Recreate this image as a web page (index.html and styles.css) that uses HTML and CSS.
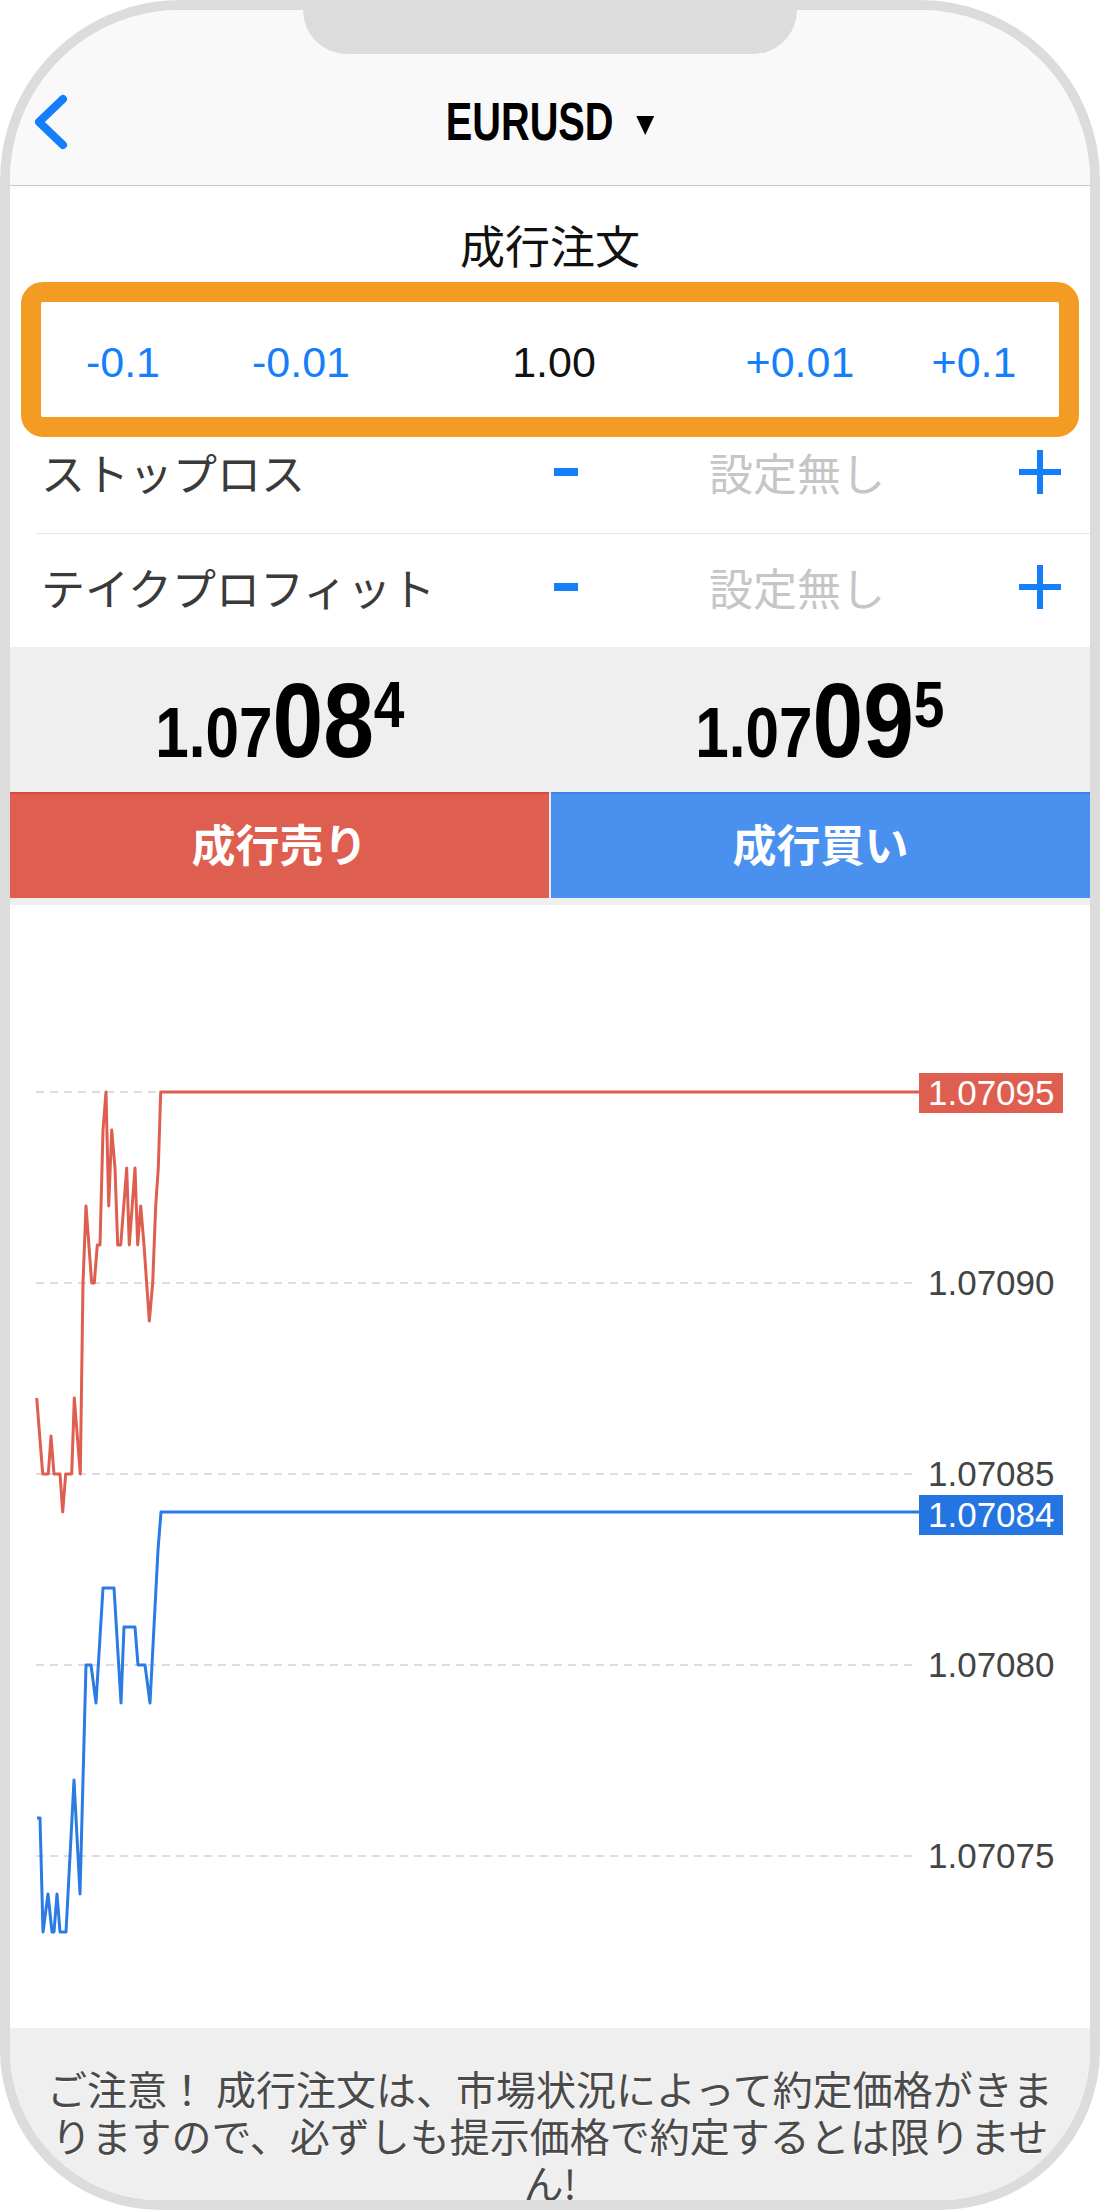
FILE: index.html
```html
<!DOCTYPE html>
<html lang="ja">
<head>
<meta charset="utf-8">
<title>EURUSD 成行注文</title>
<link rel="stylesheet" href="styles.css">
</head>
<body>
<div class="phone">
  <div class="notch"></div>

  <header class="nav">
    <div class="nav-left">
      <svg class="back" width="40" height="60" viewBox="0 0 40 60"><path d="M28 7 L4 30 L28 53" fill="none" stroke="#147efb" stroke-width="8" stroke-linecap="round" stroke-linejoin="round"/></svg>
    </div>
    <div class="nav-title"><span class="sym">EURUSD</span><svg class="caret" width="24" height="19" viewBox="0 0 24 19"><polygon points="0,0 24,0 12,19" fill="#000"/></svg></div>
    <div class="nav-right"></div>
  </header>

  <section class="order">
    <h1 class="order-title">成行注文</h1>
    <div class="lot-box">
      <span class="step">-0.1</span>
      <span class="step">-0.01</span>
      <span class="lot">1.00</span>
      <span class="step">+0.01</span>
      <span class="step">+0.1</span>
    </div>
    <div class="param-row first">
      <span class="param-label">ストップロス</span>
      <span class="minus"></span>
      <span class="param-value">設定無し</span>
      <svg class="plus" width="42" height="44" viewBox="0 0 42 44"><path d="M21 0V44M0 22H42" stroke="#147efb" stroke-width="6"/></svg>
    </div>
    <div class="divider"></div>
    <div class="param-row second">
      <span class="param-label">テイクプロフィット</span>
      <span class="minus"></span>
      <span class="param-value">設定無し</span>
      <svg class="plus" width="42" height="44" viewBox="0 0 42 44"><path d="M21 0V44M0 22H42" stroke="#147efb" stroke-width="6"/></svg>
    </div>
  </section>

  <section class="quotes">
    <div class="quote"><span class="price"><span class="p-small">1.07</span><span class="p-big">08</span><span class="p-sup">4</span></span></div>
    <div class="quote"><span class="price"><span class="p-small">1.07</span><span class="p-big">09</span><span class="p-sup">5</span></span></div>
  </section>

  <div class="actions">
    <div class="btn sell">成行売り</div>
    <div class="btn buy">成行買い</div>
  </div>

  <div class="chart">
    <svg width="1080" height="1123" viewBox="0 0 1080 1123">
      <g stroke="#d3d3d3" stroke-width="1.5" stroke-dasharray="8 6" fill="none">
        <line x1="26" y1="187" x2="902" y2="187"/>
        <line x1="26" y1="378" x2="902" y2="378"/>
        <line x1="26" y1="569" x2="902" y2="569"/>
        <line x1="26" y1="760" x2="902" y2="760"/>
        <line x1="26" y1="951" x2="902" y2="951"/>
      </g>
      <g font-family="Liberation Sans, Arial, sans-serif" font-size="35" fill="#444">
        <text x="918" y="390">1.07090</text>
        <text x="918" y="581">1.07085</text>
        <text x="918" y="772">1.07080</text>
        <text x="918" y="963">1.07075</text>
      </g>
      <polyline fill="none" stroke="#de5e50" stroke-width="3" stroke-linejoin="round" points="26.7,493 32.7,569 38.3,569 41,531 44,569 50,569 52.7,607 55.7,569 61.7,569 64.3,493 70.3,569 73,378 76,301 81.7,378 84.3,378 87.3,340 90,340 93,225 96,187 98.7,301 101.7,225 105,263 107.7,340 110.7,340 116.7,263 119.3,340 125,263 127.7,340 130.7,301 134,340 139.3,416 142.7,378 145.7,301 148.3,263 150.7,187 909,187"/>
      <polyline fill="none" stroke="#2a7be3" stroke-width="3" stroke-linejoin="round" points="27,913 30,913 33,1027 38,989 42,1027 44,1027 47,989 50,1027 56,1027 64,875 70,989 76,760 81,760 86,798 93,683 104,683 111,798 114,722 125,722 128,760 135,760 140,798 148,645 151,607 909,607"/>
      <rect x="909" y="168" width="144" height="40" fill="#de5e50"/>
      <text x="918" y="200" font-family="Liberation Sans, Arial, sans-serif" font-size="35" fill="#fff">1.07095</text>
      <rect x="909" y="590" width="144" height="40" fill="#2475e1"/>
      <text x="918" y="622" font-family="Liberation Sans, Arial, sans-serif" font-size="35" fill="#fff">1.07084</text>
    </svg>
  </div>

  <footer class="notice">ご注意！ 成行注文は、市場状況によって約定価格がきまりますので、必ずしも提示価格で約定するとは限りません!</footer>
</div>
</body>
</html>
```

FILE: styles.css
```css
* { box-sizing: border-box; }

html, body {
  margin: 0;
  padding: 0;
  background: #ffffff;
}

body {
  font-family: "Liberation Sans", "Noto Sans CJK JP", sans-serif;
  color: #000;
}

.phone {
  position: relative;
  width: 1100px;
  height: 2210px;
  border: 10px solid #dcdcdc;
  border-radius: 180px 180px 160px 160px;
  overflow: hidden;
  background: #ffffff;
  display: flex;
  flex-direction: column;
}

.notch {
  position: absolute;
  top: 0;
  left: 50%;
  margin-left: -247px;
  width: 494px;
  height: 44px;
  background: #dcdcdc;
  border-radius: 0 0 44px 44px;
  z-index: 2;
}

/* header */
.nav {
  flex: none;
  height: 176px;
  padding-top: 48px;
  background: #f9f9f9;
  border-bottom: 1px solid #c9c9c9;
  display: grid;
  grid-template-columns: 1fr auto 1fr;
  align-items: center;
}

.nav-left {
  padding-left: 25px;
  display: flex;
  align-items: center;
}

.back { display: block; }

.nav-title {
  display: inline-block;
  font-family: "Liberation Sans", sans-serif;
  font-weight: 700;
  font-size: 53px;
  line-height: 1;
  white-space: nowrap;
  transform: scaleX(0.75);
}

.caret {
  margin-left: 30px;
  vertical-align: 5px;
}

/* order section */
.order {
  flex: none;
  background: #ffffff;
}

.order-title {
  margin: 0;
  padding: 37px 0 15px;
  font-family: "Noto Sans CJK JP", sans-serif;
  font-weight: 400;
  font-size: 45px;
  line-height: 44px;
  text-align: center;
  color: #111;
}

.lot-box {
  margin: 0 11px;
  height: 155px;
  border: 20px solid #f39c24;
  border-radius: 22px;
  background: #ffffff;
  display: grid;
  grid-template-columns: 164px 192px 314px 178px 170px;
  align-items: center;
  padding-top: 5px;
  font-family: "Liberation Sans", sans-serif;
  font-size: 43px;
  line-height: 1;
  text-align: center;
}

.step { color: #147efb; }
.lot { color: #111; }

.param-row {
  display: grid;
  grid-template-columns: 1fr 72px 390px 69px;
  align-items: center;
  padding-left: 31px;
  padding-right: 29px;
  font-family: "Noto Sans CJK JP", sans-serif;
  font-size: 44px;
  line-height: 1;
}

.param-row.first {
  height: 96px;
  padding-bottom: 27px;
}

.param-row.second {
  height: 113px;
  padding-bottom: 8px;
}

.param-label {
  color: #3a3a3a;
  white-space: nowrap;
}

.minus {
  justify-self: center;
  width: 24px;
  height: 8px;
  background: #147efb;
}

.param-value {
  text-align: center;
  color: #c6c6c6;
}

.plus {
  justify-self: end;
  display: block;
}

.divider {
  height: 1px;
  margin-left: 26px;
  background: #e6e6e6;
}

/* quotes */
.quotes {
  flex: none;
  height: 145px;
  background: #efefef;
  display: grid;
  grid-template-columns: 1fr 1fr;
}

.quote {
  display: flex;
  align-items: center;
  justify-content: center;
}

.price {
  display: inline-block;
  font-family: "Liberation Sans", sans-serif;
  font-weight: 700;
  font-size: 70px;
  line-height: 1;
  white-space: nowrap;
  color: #000;
  transform: scaleX(0.86);
}

.p-small { font-size: 70px; }
.p-big { font-size: 106px; }
.p-sup {
  font-size: 64px;
  vertical-align: 30px;
}

/* buttons */
.actions {
  flex: none;
  display: grid;
  grid-template-columns: 1fr 1fr;
  column-gap: 2px;
  background: #e9e9e9;
  border-bottom: 7px solid #efefef;
}

.btn {
  height: 106px;
  padding-bottom: 6px;
  display: flex;
  align-items: center;
  justify-content: center;
  font-family: "Noto Sans CJK JP", sans-serif;
  font-weight: 700;
  font-size: 44px;
  line-height: 1;
  color: #ffffff;
}

.sell {
  background: #de5e50;
  border-top: 2px solid #d24c3f;
}

.buy {
  background: #4a91ef;
  border-top: 2px solid #3b84e6;
}

/* chart */
.chart {
  flex: none;
  height: 1123px;
  background: #ffffff;
}

.chart svg { display: block; }

/* footer */
.notice {
  flex: none;
  height: 172px;
  overflow: hidden;
  padding: 37px 24px 0;
  background: #efefef;
  font-family: "Noto Sans CJK JP", sans-serif;
  font-size: 40px;
  line-height: 47px;
  color: #4a4a4a;
  text-align: center;
  text-shadow: 0 1px 0 #ffffff;
}
```
